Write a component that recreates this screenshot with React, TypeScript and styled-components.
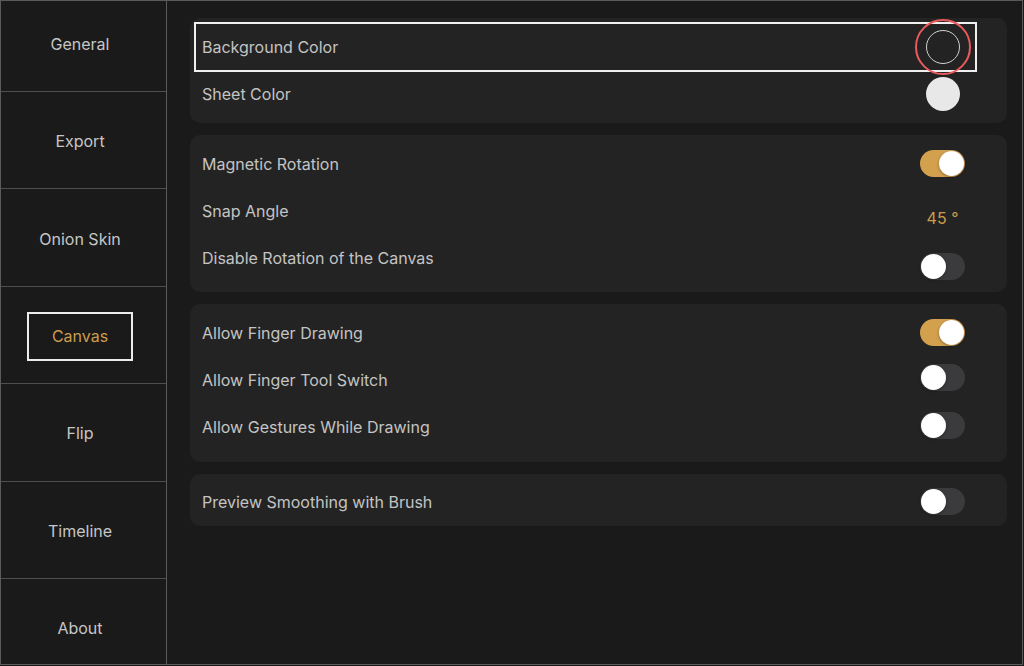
import React from "react";
import styled, { createGlobalStyle } from "styled-components";

const Global = createGlobalStyle`
  html, body { margin: 0; padding: 0; background: #1a1a1a; }
  body { font-family: Inter, "Noto Sans", sans-serif; -webkit-font-smoothing: antialiased; }
  * { box-sizing: border-box; }
`;

const Frame = styled.div`
  width: 1023px;
  height: 665px;
  border: 1px solid #5a5a5a;
  display: flex;
  background: #1a1a1a;
  overflow: hidden;
`;

const Sidebar = styled.nav`
  width: 166px;
  flex: none;
  border-right: 1px solid #5a5a5a;
  overflow: hidden;
`;

const NavList = styled.div`
  display: flex;
  flex-direction: column;
  margin-top: -6.4px;
`;

const NavItem = styled.div`
  height: 97.4px;
  flex: none;
  border-bottom: 1px solid #4e4e4e;
  display: flex;
  align-items: center;
  justify-content: center;
  padding: 2px 7px 0 0;
  font-size: 16px;
  color: #c8c8c8;
`;

const NavLabel = styled.span<{ $active?: boolean }>`
  color: ${(p) => (p.$active ? "#cc9c4c" : "#c6c6c6")};
  ${(p) =>
    p.$active
      ? `border: 2px solid #ececec; width: 106px; height: 49px; display: flex; align-items: center; justify-content: center; margin-top: 1px;`
      : ""}
`;

const Main = styled.main`
  flex: 1;
  display: flex;
  flex-direction: column;
  gap: 12px;
  padding: 17px 15px 0 23px;
`;

const Card = styled.section<{ $pt: number; $pb: number }>`
  position: relative;
  background: #232323;
  border-radius: 10px;
  padding: ${(p) => p.$pt}px 42px ${(p) => p.$pb}px 12px;
  display: flex;
  flex-direction: column;
`;

const Row = styled.div`
  height: 47px;
  display: flex;
  align-items: flex-start;
  justify-content: space-between;
`;

const Label = styled.span`
  font-size: 16px;
  line-height: 47px;
  padding-top: 1px;
  color: #c4c4c4;
`;

const Control = styled.div<{ $offset?: number }>`
  width: 45px;
  height: 47px;
  display: flex;
  align-items: center;
  justify-content: center;
  margin-top: ${(p) => p.$offset ?? 0}px;
`;

const Track = styled.div<{ $on: boolean }>`
  position: relative;
  width: 45px;
  height: 27px;
  border-radius: 14px;
  background: ${(p) => (p.$on ? "#d3a04e" : "#3b3b3d")};
`;

const Knob = styled.div<{ $on: boolean }>`
  position: absolute;
  top: 1px;
  left: ${(p) => (p.$on ? "19px" : "1px")};
  width: 25px;
  height: 25px;
  border-radius: 50%;
  background: #ffffff;
  box-shadow: 0 1px 3px rgba(0, 0, 0, 0.35);
`;

const Swatch = styled.div<{ $fill: string; $ring?: boolean }>`
  width: 34px;
  height: 34px;
  border-radius: 50%;
  background: ${(p) => p.$fill};
  border: ${(p) => (p.$ring ? "1.5px solid #d0d0d0" : "none")};
`;

const Value = styled.span`
  font-size: 16px;
  color: #cc9c4c;
`;

const Highlight = styled.div`
  position: absolute;
  left: 4px;
  top: 4px;
  width: 783px;
  height: 50px;
  border: 2px solid #f0f0f0;
  pointer-events: none;
`;

const Callout = styled.div`
  position: absolute;
  left: 725px;
  top: 1px;
  width: 56px;
  height: 56px;
  border-radius: 50%;
  border: 2.5px solid #ea5a5c;
  pointer-events: none;
`;

const Toggle = ({ on }: { on: boolean }) => (
  <Track $on={on}>
    <Knob $on={on} />
  </Track>
);

const nav = ["General", "Export", "Onion Skin", "Canvas", "Flip", "Timeline", "About"];

export default function App() {
  return (
    <>
      <Global />
      <Frame>
        <Sidebar>
          <NavList>
            {nav.map((n) => (
              <NavItem key={n}>
                <NavLabel $active={n === "Canvas"}>{n}</NavLabel>
              </NavItem>
            ))}
          </NavList>
        </Sidebar>
        <Main>
          <Card $pt={5} $pb={6}>
            <Row>
              <Label>Background Color</Label>
              <Control>
                <Swatch $fill="transparent" $ring />
              </Control>
            </Row>
            <Row>
              <Label>Sheet Color</Label>
              <Control>
                <Swatch $fill="#e8e8e8" />
              </Control>
            </Row>
            <Highlight />
            <Callout />
          </Card>
          <Card $pt={5} $pb={11}>
            <Row>
              <Label>Magnetic Rotation</Label>
              <Control>
                <Toggle on />
              </Control>
            </Row>
            <Row>
              <Label>Snap Angle</Label>
              <Control $offset={7}>
                <Value>45 °</Value>
              </Control>
            </Row>
            <Row>
              <Label>Disable Rotation of the Canvas</Label>
              <Control $offset={9}>
                <Toggle on={false} />
              </Control>
            </Row>
          </Card>
          <Card $pt={5} $pb={12}>
            <Row>
              <Label>Allow Finger Drawing</Label>
              <Control>
                <Toggle on />
              </Control>
            </Row>
            <Row>
              <Label>Allow Finger Tool Switch</Label>
              <Control $offset={-2}>
                <Toggle on={false} />
              </Control>
            </Row>
            <Row>
              <Label>Allow Gestures While Drawing</Label>
              <Control $offset={-1}>
                <Toggle on={false} />
              </Control>
            </Row>
          </Card>
          <Card $pt={4} $pb={1}>
            <Row>
              <Label>Preview Smoothing with Brush</Label>
              <Control>
                <Toggle on={false} />
              </Control>
            </Row>
          </Card>
        </Main>
      </Frame>
    </>
  );
}
